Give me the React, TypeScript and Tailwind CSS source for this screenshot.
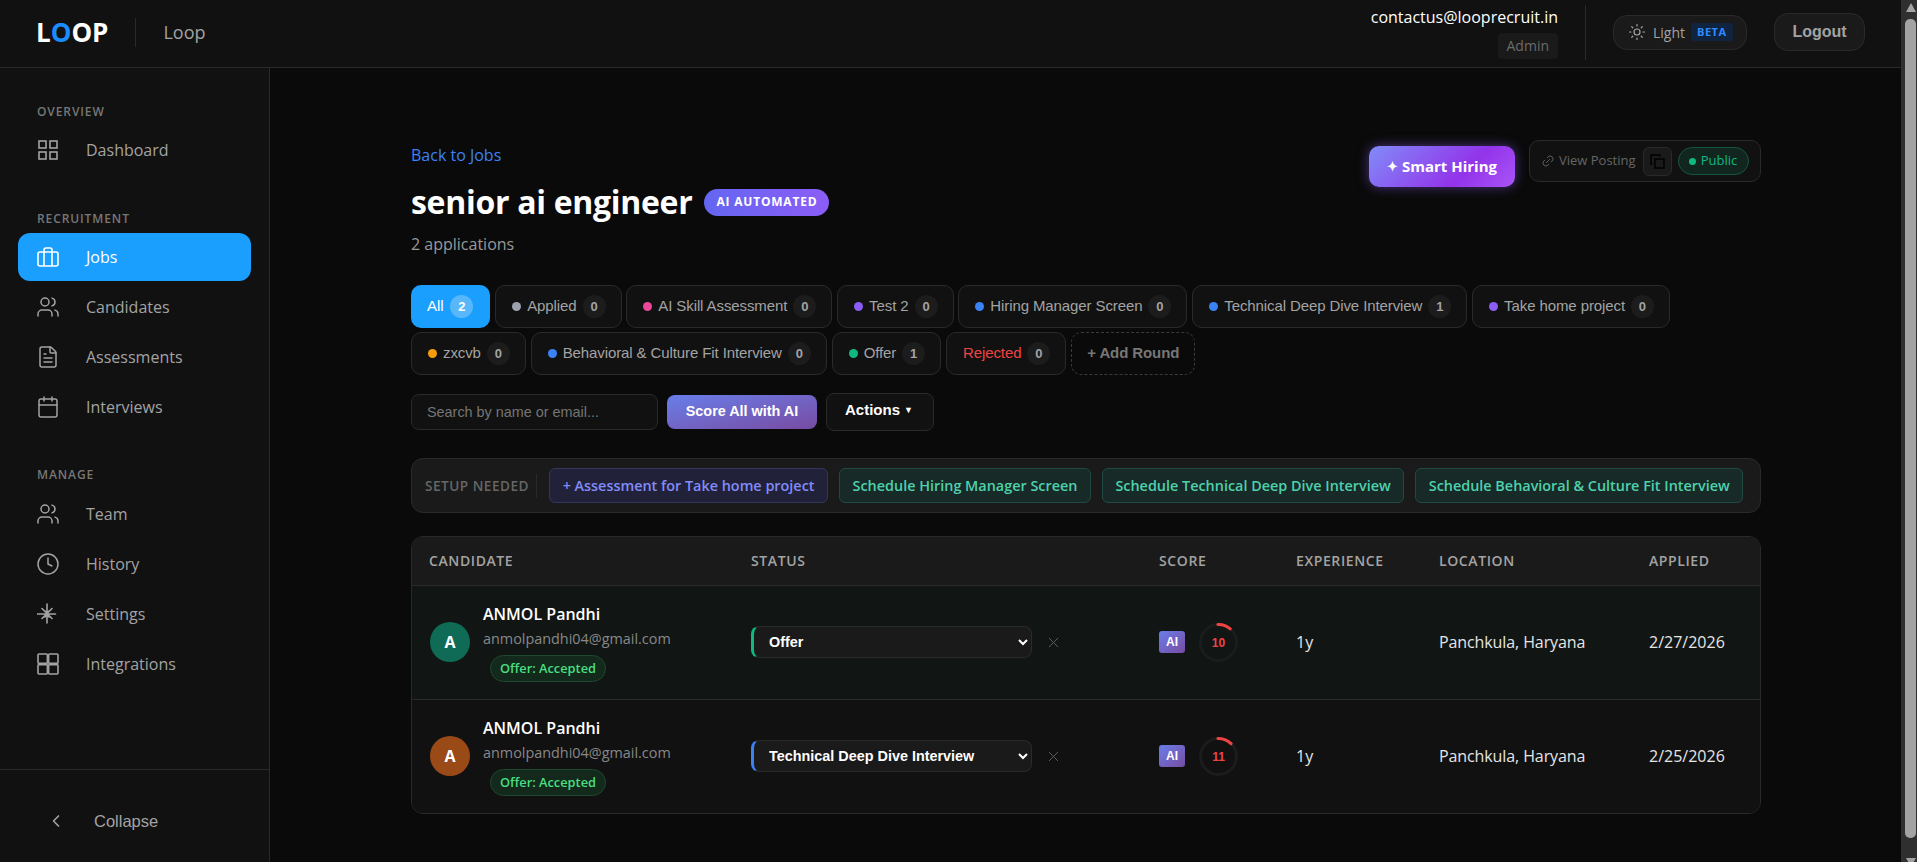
import {
  Calendar,
  ChevronLeft,
  Clock,
  FileText,
  Link2,
  Sun,
  Users,
  X,
} from 'lucide-react';
import type { ReactNode } from 'react';

const GridIcon = () => (
  <svg width="22" height="22" viewBox="0 0 22 22" fill="none" stroke="currentColor" strokeWidth="1.6">
    <rect x="2" y="2" width="7" height="7" />
    <rect x="13" y="2" width="7" height="7" />
    <rect x="2" y="13" width="7" height="7" />
    <rect x="13" y="13" width="7" height="7" />
  </svg>
);

const TightGridIcon = () => (
  <svg width="22" height="22" viewBox="0 0 22 22" fill="none" stroke="currentColor" strokeWidth="1.6" strokeLinejoin="round">
    <rect x="1" y="1" width="9.4" height="9.4" rx="1" />
    <rect x="11.6" y="1" width="9.4" height="9.4" rx="1" />
    <rect x="1" y="11.6" width="9.4" height="9.4" rx="1" />
    <rect x="11.6" y="11.6" width="9.4" height="9.4" rx="1" />
  </svg>
);

const BriefcaseIcon = () => (
  <svg width="22" height="22" viewBox="0 0 22 22" fill="none" stroke="currentColor" strokeWidth="1.6" strokeLinejoin="round">
    <rect x="1" y="6" width="20" height="14" rx="2" />
    <path d="M7 20V4a2 2 0 0 1 2-2h4a2 2 0 0 1 2 2v16" />
  </svg>
);

const BurstIcon = () => (
  <svg width="22" height="22" viewBox="0 0 22 22" fill="none" stroke="currentColor" strokeWidth="1.6" strokeLinecap="round">
    <path d="M10 1v19M0.5 11h18M5 5.5l10 10M15 5.5l-10 10M8 8l4 6M12 8l-4 6" />
  </svg>
);

const CopyIcon = () => (
  <svg width="15" height="15" viewBox="0 0 15 15" fill="none" stroke="currentColor" strokeWidth="1.5">
    <rect x="5" y="5" width="9" height="9" />
    <path d="M10 2.5V1H1v9h1.5" />
  </svg>
);

type NavItem = { label: string; icon: ReactNode; active?: boolean };

const navGroups: { title: string; labelGap: string; groupGap: string; items: NavItem[] }[] = [
  {
    title: 'OVERVIEW',
    labelGap: 'mb-[5px]',
    groupGap: 'mb-[36px]',
    items: [{ label: 'Dashboard', icon: <GridIcon /> }],
  },
  {
    title: 'RECRUITMENT',
    labelGap: 'mb-[6px]',
    groupGap: 'mb-[35px]',
    items: [
      { label: 'Jobs', icon: <BriefcaseIcon />, active: true },
      { label: 'Candidates', icon: <Users size={24} strokeWidth={1.5} /> },
      { label: 'Assessments', icon: <FileText size={24} strokeWidth={1.5} /> },
      { label: 'Interviews', icon: <Calendar size={24} strokeWidth={1.5} /> },
    ],
  },
  {
    title: 'MANAGE',
    labelGap: 'mb-[6px]',
    groupGap: 'mb-0',
    items: [
      { label: 'Team', icon: <Users size={24} strokeWidth={1.5} /> },
      { label: 'History', icon: <Clock size={24} strokeWidth={1.5} /> },
      { label: 'Settings', icon: <BurstIcon /> },
      { label: 'Integrations', icon: <TightGridIcon /> },
    ],
  },
];

const rowOneTabs = [
  { label: 'Applied', dot: 'bg-[#9ca3af]', count: 0 },
  { label: 'AI Skill Assessment', dot: 'bg-[#ec4899]', count: 0 },
  { label: 'Test 2', dot: 'bg-[#8b5cf6]', count: 0 },
  { label: 'Hiring Manager Screen', dot: 'bg-[#3b82f6]', count: 0 },
  { label: 'Technical Deep Dive Interview', dot: 'bg-[#3b82f6]', count: 1 },
  { label: 'Take home project', dot: 'bg-[#8b5cf6]', count: 0 },
];

const rowTwoTabs = [
  { label: 'zxcvb', dot: 'bg-[#f59e0b]', count: 0 },
  { label: 'Behavioral & Culture Fit Interview', dot: 'bg-[#3b82f6]', count: 0 },
  { label: 'Offer', dot: 'bg-[#10b981]', count: 1 },
];

const setupChips = [
  'Schedule Hiring Manager Screen',
  'Schedule Technical Deep Dive Interview',
  'Schedule Behavioral & Culture Fit Interview',
];

const stages = [
  'Applied',
  'AI Skill Assessment',
  'Test 2',
  'Hiring Manager Screen',
  'Technical Deep Dive Interview',
  'Take home project',
  'zxcvb',
  'Behavioral & Culture Fit Interview',
  'Offer',
  'Rejected',
];

const candidates = [
  {
    avatar: 'bg-[#0f6b55]',
    stage: 'Offer',
    stageBorder: 'border-l-[#10b981]',
    score: 10,
    applied: '2/27/2026',
    rowBg: 'bg-[#111614]',
  },
  {
    avatar: 'bg-[#9a4a17]',
    stage: 'Technical Deep Dive Interview',
    stageBorder: 'border-l-[#3b82f6]',
    score: 11,
    applied: '2/25/2026',
    rowBg: 'bg-[#111111]',
  },
];

const Sidebar = () => (
  <aside className="flex w-[270px] shrink-0 flex-col border-r border-[#2a2a2a] bg-[#111111]">
    <nav className="flex-1 pt-[36px]">
      {navGroups.map((group) => (
        <div key={group.title} className={group.groupGap}>
          <div className={`pl-[37px] text-[12px] leading-4 font-semibold tracking-[0.9px] text-[#777777] ${group.labelGap}`}>
            {group.title}
          </div>
          {group.items.map((item) => (
            <div
              key={item.label}
              className={
                item.active
                  ? 'mx-[18px] mt-px mb-px flex h-12 items-center gap-[26px] rounded-[12px] bg-[#1a9fff] pl-[18px] text-white'
                  : 'mx-[18px] flex h-[50px] items-center gap-[26px] pl-[18px] text-[#a3a3a3]'
              }
            >
              <span className="flex w-6 shrink-0 items-center justify-center">{item.icon}</span>
              <span className="text-[16px]">{item.label}</span>
            </div>
          ))}
        </div>
      ))}
    </nav>
    <div className="flex h-[93px] items-center gap-[28px] border-t border-[#2a2a2a] pt-[10px] pl-[46px] font-['Liberation_Sans',Arial,sans-serif] text-[16.5px] text-[#a3a3a3]">
      <ChevronLeft size={20} strokeWidth={2} />
      <span>Collapse</span>
    </div>
  </aside>
);

const Header = () => (
  <header className="flex h-[68px] shrink-0 items-center border-b border-[#2a2a2a] bg-[#111111] pb-[3px] pl-[36px]">
    <div className="text-[26px] leading-none font-bold text-white">
      L<span className="text-[#1a8cff]">O</span>OP
    </div>
    <div className="mx-[27px] h-[29px] w-px bg-[#2a2a2a]" />
    <div className="text-[18px] text-[#a3a3a3]">Loop</div>
    <div className="ml-auto flex items-center pr-[36px]">
      <div className="flex flex-col items-end">
        <div className="text-[16px] leading-[22px] text-white">contactus@looprecruit.in</div>
        <div className="mt-[5px] rounded-[4px] bg-[#1a1a1a] px-[9px] text-[14px] leading-[26px] text-[#6b6b6b]">
          Admin
        </div>
      </div>
      <div className="mx-[27px] h-[55px] w-px bg-[#2a2a2a]" />
      <div className="flex h-[35px] w-[134px] items-center rounded-[14px] border border-[#2a2a2a] bg-[#1a1a1a] pl-[14px] text-[14px] text-[#a3a3a3]">
        <Sun size={18} strokeWidth={1.6} />
        <span className="ml-[7px]">Light</span>
        <span className="ml-[6px] rounded-[3px] bg-[#10233f] px-[6px] text-[11px] leading-[18px] font-bold tracking-[0.5px] text-[#2f8cff]">
          BETA
        </span>
      </div>
      <button className="ml-[27px] h-[38px] w-[91px] rounded-[14px] border border-[#2a2a2a] bg-[#1a1a1a] font-['Liberation_Sans',Arial,sans-serif] text-[16px] font-bold text-[#a3a3a3]">
        Logout
      </button>
    </div>
  </header>
);

const Count = ({ value, active }: { value: number; active?: boolean }) => (
  <span
    className={
      active
        ? 'flex h-[23px] w-[23px] items-center justify-center rounded-full bg-[#58b7fb] text-[13px] font-bold tracking-normal text-white'
        : 'flex h-[23px] w-[23px] items-center justify-center rounded-full bg-[#1c1c1c] text-[13px] font-bold tracking-normal text-[#a3a3a3]'
    }
  >
    {value}
  </span>
);

const Tab = ({ label, dot, count }: { label: string; dot: string; count: number }) => (
  <div className="flex h-[43px] items-center rounded-[10px] border border-[#2a2a2a] bg-[#111111] pr-[15px] pl-[16px] text-[15px] tracking-[-0.1px] text-[#a3a3a3]">
    <span className={`mr-[6px] h-[9px] w-[9px] rounded-full ${dot}`} />
    <span>{label}</span>
    <span className="ml-[6px]">
      <Count value={count} />
    </span>
  </div>
);

const ScoreRing = ({ score }: { score: number }) => (
  <svg width="39" height="39" viewBox="0 0 39 39">
    <circle cx="19.5" cy="19.5" r="18" fill="none" stroke="#1c1c1c" strokeWidth="3" />
    <circle
      cx="19.5"
      cy="19.5"
      r="18"
      fill="none"
      stroke="#ef4444"
      strokeWidth="3"
      strokeLinecap="round"
      strokeDasharray={`${(score / 100) * 113 + 2} 113`}
      transform="rotate(-92 19.5 19.5)"
    />
    <text x="19.5" y="24" textAnchor="middle" fontSize="12" fontWeight="700" fill="#ef4444" fontFamily="Liberation Sans, Arial, sans-serif">
      {score}
    </text>
  </svg>
);

const CandidateRow = ({ row }: { row: (typeof candidates)[number] }) => (
  <tr className={`h-[114px] border-t border-[#2a2a2a] ${row.rowBg}`}>
    <td className="pl-[18px]">
      <div className="flex items-center gap-[13px]">
        <div className={`flex h-10 w-10 items-center justify-center rounded-full text-[16px] font-bold text-white ${row.avatar}`}>
          A
        </div>
        <div>
          <div className="text-[16px] leading-[22px] font-semibold text-white">ANMOL Pandhi</div>
          <div className="mt-[4px] text-[14.4px] leading-[20px] text-[#888888]">anmolpandhi04@gmail.com</div>
          <div className="mt-[6px] ml-[7px] w-fit rounded-full border border-[#1f4a30] bg-[#12291c] px-[9px] text-[12.8px] leading-[25px] font-semibold text-[#4ade80]">
            Offer: Accepted
          </div>
        </div>
      </div>
    </td>
    <td className="pl-[18px]">
      <div className="flex items-center">
        <select
          defaultValue={row.stage}
          className={`h-[32px] w-[281px] rounded-[8px] border border-l-[3px] border-[#2a2a2a] bg-[#1a1a1a] pl-[11px] font-['Liberation_Sans',Arial,sans-serif] text-[14.4px] font-bold text-white ${row.stageBorder}`}
        >
          {stages.map((s) => (
            <option key={s}>{s}</option>
          ))}
        </select>
        <X size={17} strokeWidth={1.4} className="ml-[13px] text-[#5c5c5c]" />
      </div>
    </td>
    <td className="pl-[18px]">
      <div className="flex items-center gap-[14px]">
        <span className="flex h-[22px] w-[26px] items-center justify-center rounded-[3px] bg-gradient-to-br from-[#667eea] to-[#764ba2] font-['Liberation_Sans',Arial,sans-serif] text-[12px] font-bold text-white">
          AI
        </span>
        <ScoreRing score={row.score} />
      </div>
    </td>
    <td className="pl-[18px] text-[16px] text-[#e5e5e5]">1y</td>
    <td className="pl-[18px] text-[16px] tracking-[-0.1px] text-[#e5e5e5]">Panchkula, Haryana</td>
    <td className="pl-[18px] text-[16px] text-[#e5e5e5]">{row.applied}</td>
  </tr>
);

const Scrollbar = () => (
  <div className="flex h-[862px] w-[16px] shrink-0 flex-col items-end overflow-hidden bg-[#2f2f2f] pr-px">
    <div className="mt-[3px] h-0 w-0 border-x-[5.5px] border-b-[9px] border-x-transparent border-b-[#a3a3a3]" />
    <div className="mt-[7px] h-[819px] w-[11px] shrink-0 rounded-[5px] bg-[#a3a3a3]" />
    <div className="mt-[20px] h-0 w-0 shrink-0 border-x-[5.5px] border-t-[9px] border-x-transparent border-t-[#a3a3a3]" />
  </div>
);

export default function App() {
  return (
    <div className="flex h-[862px] overflow-hidden bg-[#0a0a0a] font-['Open_Sans',sans-serif]">
      <div className="flex min-w-0 flex-1 flex-col">
        <Header />
        <div className="flex min-h-0 flex-1">
          <Sidebar />
          <main className="flex-1 overflow-hidden">
            <div className="ml-[141px] w-[1350px] pt-[76px]">
              <div className="flex items-start justify-between">
                <div>
                  <div className="text-[16px] leading-[22px] text-[#3b82f6]">Back to Jobs</div>
                  <div className="mt-[14px] flex items-center gap-[12px]">
                    <h1 className="text-[32px] leading-[44px] font-bold tracking-[-0.3px] text-white">senior ai engineer</h1>
                    <span className="flex h-[27px] items-center rounded-full bg-gradient-to-r from-[#6366f1] to-[#8b5cf6] px-[12px] text-[12px] font-bold tracking-[0.8px] text-white">
                      AI AUTOMATED
                    </span>
                  </div>
                  <div className="mt-[9px] text-[16px] leading-[22px] text-[#999999]">2 applications</div>
                </div>
                <div className="flex items-start gap-[14px]">
                  <button className="mt-[2px] flex h-[41px] w-[146px] items-center justify-center gap-[4px] rounded-[10px] bg-[linear-gradient(135deg,#818cf8,#9333ea_65%,#a855f7)] text-[15px] font-bold text-white shadow-[0_0_12px_rgba(139,92,246,0.5)]">
                    <span className="text-[13px]">✦</span> Smart Hiring
                  </button>
                  <div className="-mt-[4px] flex h-[42px] w-[232px] items-center rounded-[10px] border border-[#2a2a2a] bg-[#111111] pl-[11px] text-[13px] text-[#666666]">
                    <Link2 size={14} strokeWidth={1.5} className="-rotate-45" />
                    <span className="ml-[4px]">View Posting</span>
                    <span className="ml-[7px] flex h-[29px] w-[29px] items-center justify-center rounded-[6px] border border-[#2a2a2a] bg-[#1a1a1a] text-[#000000]">
                      <CopyIcon />
                    </span>
                    <span className="ml-[6px] flex h-[28px] w-[71px] items-center justify-center gap-[5px] rounded-full border border-[#14553f] bg-[#10261f] text-[#10b981]">
                      <span className="h-[7px] w-[7px] rounded-full bg-[#10b981]" />
                      Public
                    </span>
                  </div>
                </div>
              </div>

              <div className="mt-[30px] flex flex-col gap-[4px] font-['Liberation_Sans',Arial,sans-serif]">
                <div className="flex gap-[4.8px]">
                  <div className="flex h-[43px] items-center gap-[7px] rounded-[10px] bg-[#1a9fff] pr-[17px] pl-[16px] text-[15px] tracking-[-0.1px] text-white">
                    All <Count value={2} active />
                  </div>
                  {rowOneTabs.map((t) => (
                    <Tab key={t.label} {...t} />
                  ))}
                </div>
                <div className="flex gap-[4.8px]">
                  {rowTwoTabs.map((t) => (
                    <Tab key={t.label} {...t} />
                  ))}
                  <div className="flex h-[43px] items-center gap-[6px] rounded-[10px] border border-[#2a2a2a] bg-[#111111] pr-[15px] pl-[16px] text-[15px] tracking-[-0.1px] text-[#ef4444]">
                    Rejected <Count value={0} />
                  </div>
                  <div className="flex h-[43px] items-center rounded-[10px] border border-dashed border-[#3a3a3a] px-[15px] text-[15px] font-bold tracking-[-0.1px] text-[#777777]">
                    + Add Round
                  </div>
                </div>
              </div>

              <div className="mt-[18px] flex items-center gap-[9px] font-['Liberation_Sans',Arial,sans-serif]">
                <input
                  placeholder="Search by name or email..."
                  className="h-[36px] w-[247px] rounded-[8px] border border-[#2a2a2a] bg-[#111111] px-[15px] text-[14.4px] text-white outline-none placeholder:text-[#757575]"
                />
                <button className="h-[34px] w-[150px] rounded-[8px] bg-gradient-to-br from-[#667eea] to-[#764ba2] text-[14.4px] font-bold text-white">
                  Score All with AI
                </button>
                <button className="flex h-[38px] w-[108px] items-center justify-center gap-[4px] rounded-[8px] border border-[#2a2a2a] bg-[#111111] pr-[2px] pb-[3px] text-[15px] font-bold text-white">
                  Actions <span className="text-[9px]">▼</span>
                </button>
              </div>

              <div className="mt-[27px] flex h-[55px] items-center rounded-[12px] border border-[#2a2a2a] bg-[#1a1a1a] pl-[13px]">
                <span className="border-r border-[#2a2a2a] pr-[7px] text-[13.6px] leading-[24px] font-semibold tracking-[0.5px] text-[#666666]">
                  SETUP NEEDED
                </span>
                <span className="ml-[12px] flex h-[35px] w-[279px] items-center justify-center rounded-[6px] border border-[#35355c] bg-[#21213a] text-[14.4px] font-semibold text-[#818cf8]">
                  + Assessment for Take home project
                </span>
                {setupChips.map((c) => (
                  <span
                    key={c}
                    className="ml-[11px] flex h-[35px] items-center rounded-[6px] border border-[#1f4a40] bg-[#172a28] px-[12.5px] text-[14.4px] font-semibold text-[#4fd1ac]"
                  >
                    {c}
                  </span>
                ))}
              </div>

              <div className="mt-[23px] overflow-hidden rounded-[12px] border border-[#2a2a2a]">
                <table className="w-full table-fixed border-collapse text-left">
                  <colgroup>
                    <col className="w-[321px]" />
                    <col className="w-[408px]" />
                    <col className="w-[137px]" />
                    <col className="w-[143px]" />
                    <col className="w-[210px]" />
                    <col />
                  </colgroup>
                  <thead className="bg-[#1a1a1a] text-[14px] font-semibold tracking-[0.6px] text-[#a3a3a3]">
                    <tr className="h-[48px]">
                      <th className="pb-px pl-[17px] font-semibold">CANDIDATE</th>
                      <th className="pb-px pl-[18px] font-semibold">STATUS</th>
                      <th className="pb-px pl-[18px] font-semibold">SCORE</th>
                      <th className="pb-px pl-[18px] font-semibold">EXPERIENCE</th>
                      <th className="pb-px pl-[18px] font-semibold">LOCATION</th>
                      <th className="pb-px pl-[18px] font-semibold">APPLIED</th>
                    </tr>
                  </thead>
                  <tbody>
                    {candidates.map((row) => (
                      <CandidateRow key={row.applied} row={row} />
                    ))}
                  </tbody>
                </table>
              </div>
            </div>
          </main>
        </div>
      </div>
      <Scrollbar />
    </div>
  );
}
